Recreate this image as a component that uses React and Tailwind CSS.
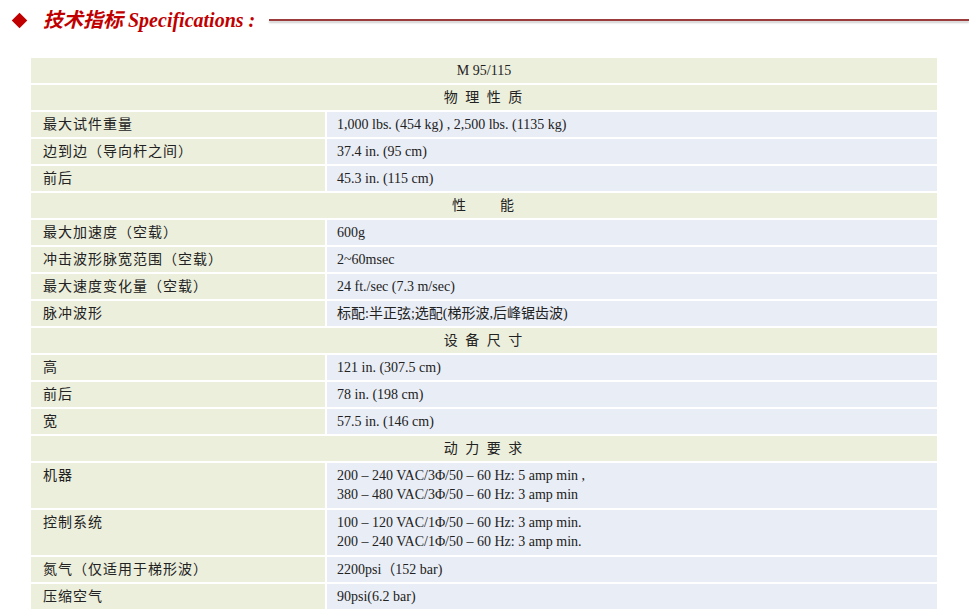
import React from 'react'

const sections = [
  { title: '物 理 性 质', rows: [
    ['最大试件重量', ['1,000 lbs. (454 kg) , 2,500 lbs. (1135 kg)']],
    ['边到边（导向杆之间）', ['37.4 in. (95 cm)']],
    ['前后', ['45.3 in. (115 cm)']],
  ]},
  { title: '性　　能', rows: [
    ['最大加速度（空载）', ['600g']],
    ['冲击波形脉宽范围（空载）', ['2~60msec']],
    ['最大速度变化量（空载）', ['24 ft./sec (7.3 m/sec)']],
    ['脉冲波形', ['标配:半正弦;选配(梯形波,后峰锯齿波)']],
  ]},
  { title: '设 备 尺 寸', rows: [
    ['高', ['121 in. (307.5 cm)']],
    ['前后', ['78 in. (198 cm)']],
    ['宽', ['57.5 in. (146 cm)']],
  ]},
  { title: '动 力 要 求', rows: [
    ['机器', ['200 – 240 VAC/3Φ/50 – 60 Hz: 5 amp min ,', '380 – 480 VAC/3Φ/50 – 60 Hz: 3 amp min']],
    ['控制系统', ['100 – 120 VAC/1Φ/50 – 60 Hz: 3 amp min.', '200 – 240 VAC/1Φ/50 – 60 Hz: 3 amp min.']],
    ['氮气（仅适用于梯形波）', ['2200psi（152 bar)']],
    ['压缩空气', ['90psi(6.2 bar)']],
  ]},
]

const font = { fontFamily: '"Liberation Serif", "Noto Sans CJK SC", serif' }

export default function App() {
  return (
    <div className="w-[969px] h-[616px] bg-white overflow-hidden text-[#222]" style={font}>
      <div className="flex items-center h-[40px] pl-[12px]">
        <div className="w-[11px] h-[11px] bg-[#c00000] rotate-45 ml-[2px]" />
        <div className="ml-[18px] text-[#c00000] italic font-bold text-[20px] whitespace-nowrap">技术指标 Specifications :</div>
        <div className="ml-[14px] flex-1 h-[2px] bg-[#9b3b3b] shadow-[0_2px_2px_rgba(0,0,0,0.2)]" />
      </div>
      <div className="ml-[31px] mt-[18px] w-[906px] text-[14px] leading-[19px]">
        <div className="h-[27px] bg-[#ecefdc] border-b-2 border-white flex items-center justify-center">M 95/115</div>
        {sections.map(s => (
          <div key={s.title}>
            <div className="h-[27px] bg-[#ecefdc] border-b-2 border-white flex items-center justify-center tracking-[2px]">{s.title}</div>
            {s.rows.map(([label, vals]) => (
              <div key={label + vals[0]} className={`flex border-b-2 border-white ${vals.length > 1 ? 'h-[47px]' : 'h-[27px]'}`}>
                <div className="w-[294px] bg-[#ecefdc] px-[12px] pt-[3px] tracking-[1px] overflow-hidden">{label}</div>
                <div className="flex-1 bg-[#e9edf5] border-l-2 border-white px-[10px] pt-[3px] overflow-hidden">
                  {vals.map(v => <div key={v}>{v}</div>)}
                </div>
              </div>
            ))}
          </div>
        ))}
      </div>
    </div>
  )
}
